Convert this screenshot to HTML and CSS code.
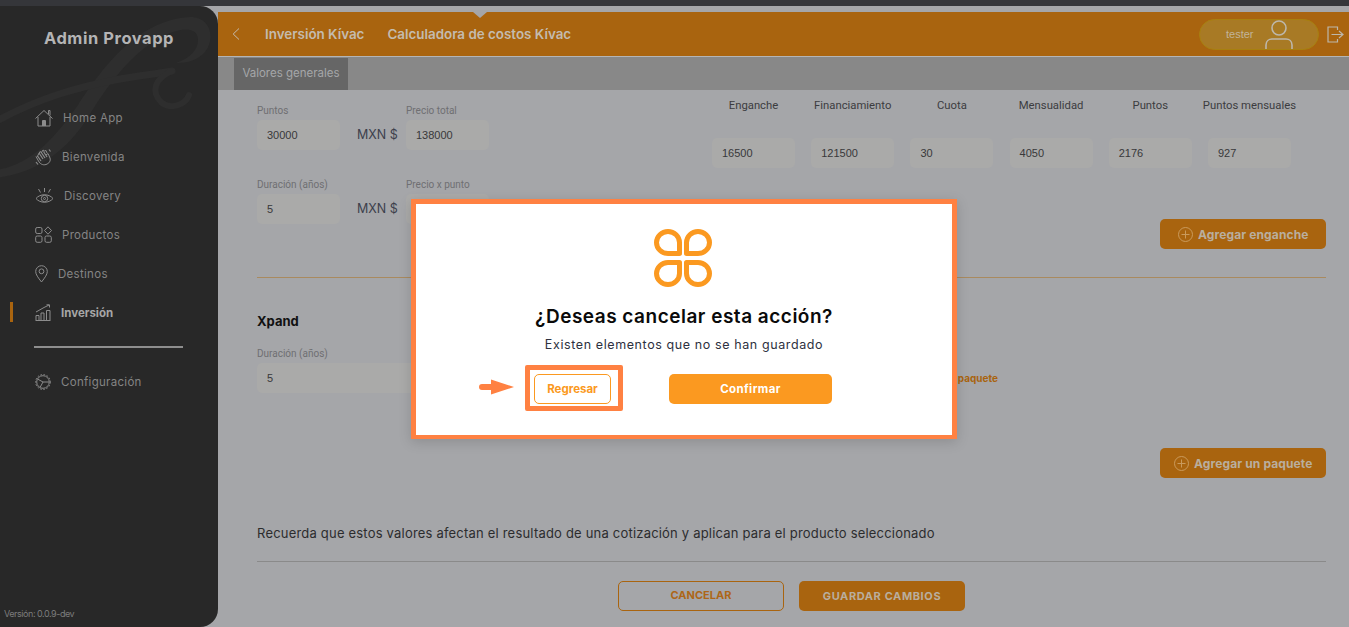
FILE: index.html
```html
<!DOCTYPE html>
<html>
    <head>
        <meta charset="utf-8">
        <title>Admin Provapp</title>
        <link rel="stylesheet" href="styles.css">
    </head>
    <body>
        <div class="strip"></div>
        <div class="app">
            <aside class="sidebar">
                <svg class="flourish" viewBox="0 0 218 200" fill="none" stroke="#2e2e2e" stroke-linecap="round">
                    <path d="M-5 170C30 166 55 138 78 105C100 72 135 20 190 17C212 17 215 40 205 52C198 60 188 63 176 63C190 58 198 50 198 40C198 28 185 27 170 33C130 50 105 90 85 122C60 158 30 174 -5 178Z" fill="#2e2e2e" stroke="none"/>
                    <path d="M-5 122C40 97 80 87 115 80C135 76 155 74 172 71" stroke-width="7"/>
                    <path d="M172 71C155 78 150 92 162 103C172 110 186 104 189 95" stroke-width="6"/>
                </svg>
                <h1 class="brand">Admin Provapp</h1>
                <nav class="menu">
                    <a class="menuItem">
                        <svg width="18" height="18" viewBox="0 0 18 18" fill="none" stroke="#8c8c8c"><path d="M0.5 9.5L9 1.5L17.5 9.5M3 8V17H15V8M7.5 17V11.5H10.5V17M13.5 5V1.5H15V6.5"/><rect x="7" y="12" width="4" height="5" fill="#8c8c8c" stroke="none"/></svg>
                        Home App
                    </a>
                    <a class="menuItem">
                        <svg width="17" height="18" viewBox="0 0 17 18" fill="none" stroke="#8c8c8c"><path d="M2 9L5 3.5L6.5 4.5L8 2L9.5 3L11 2.5L12 5M1 8.5L3.5 13C5 16 8 17.5 11 16.5C14 15.5 16 13 15 10L13 5.5L11 7"/><path d="M4 5L8 11M6 4L10 10M8.5 3.5L12 9M2.5 8L6 13M14 1.5L15.5 3.5M1 14L3 16.5" stroke-width="1.2"/></svg>
                        Bienvenida
                    </a>
                    <a class="menuItem">
                        <svg width="19" height="18" viewBox="0 0 19 18" fill="none" stroke="#8c8c8c"><path d="M1 11.5C5 6.5 14 6.5 18 11.5C14 16.5 5 16.5 1 11.5Z"/><circle cx="9.5" cy="11.5" r="3.2"/><circle cx="9.5" cy="11.5" r="1"/><path d="M9.5 1V5M3.5 2L5.5 5.5M15.5 2L13.5 5.5"/></svg>
                        Discovery
                    </a>
                    <a class="menuItem">
                        <svg width="17" height="17" viewBox="0 0 17 17" fill="none" stroke="#8c8c8c"><rect x="0.7" y="1.5" width="6.3" height="6" rx="1.5"/><rect x="0.7" y="10" width="6.3" height="6.3" rx="1.5"/><rect x="10" y="10" width="6.3" height="6.3" rx="1.5"/><path d="M13 0.8L16.5 4.5L13 8.2L9.5 4.5Z" stroke-linejoin="round"/></svg>
                        Productos
                    </a>
                    <a class="menuItem">
                        <svg width="13" height="18" viewBox="0 0 13 18" fill="none" stroke="#8c8c8c"><path d="M6.5 17C3 12.5 0.7 9.5 0.7 6.5A5.8 5.8 0 0 1 12.3 6.5C12.3 9.5 10 12.5 6.5 17Z"/><circle cx="6.5" cy="6.3" r="2.4"/></svg>
                        Destinos
                    </a>
                    <a class="menuItem active">
                        <svg width="16" height="17" viewBox="0 0 16 17" fill="none" stroke="#8c8c8c"><path d="M0.5 16.5H15.5M1 16V11.5H4V16M6 16V9H9V16M11.5 16V6.5H15V16M1 8L9 3.5L14 1M11.5 0.8H14.5V3.5"/></svg>
                        Inversión
                    </a>
                </nav>
                <hr class="sideLine">
                <a class="menuItem">
                    <svg width="16" height="16" viewBox="0 0 16 16" fill="none" stroke="#8c8c8c"><circle cx="8" cy="8" r="6.3"/><circle cx="8" cy="8" r="7.4" stroke-dasharray="1.6 1.6"/><path d="M8 8L2.5 5M8 8L14 8M8 8L5 13.5"/></svg>
                    Configuración
                </a>
                <p class="version">Versión: 0.0.9-dev</p>
            </aside>

            <main class="main">
                <header class="topbar">
                    <span class="caret"></span>
                    <svg class="back" width="8" height="12" viewBox="0 0 8 12" fill="none" stroke="#c4bbae"><path d="M7 0.5L1.2 6L7 11.5"/></svg>
                    <span class="crumb">Inversión Kívac</span>
                    <span class="crumb">Calculadora de costos Kívac</span>
                    <div class="userPill">
                        <span class="userName">tester</span>
                        <svg width="28" height="29" viewBox="0 0 28 29" fill="none" stroke="#bdb7ab" stroke-width="1.6"><circle cx="14" cy="8" r="7"/><path d="M1 29V25C1 21 4 19 7 19H21C24 19 27 21 27 25V29"/></svg>
                    </div>
                    <svg class="logout" width="17" height="17" viewBox="0 0 17 17" fill="none" stroke="#bdb7ab" stroke-width="1.2"><path d="M10.5 4V1H1V16H10.5V13M4.5 8.5H15.5M12 5L16 8.5L12 12"/></svg>
                </header>
                <div class="tabs">
                    <span class="tab">Valores generales</span>
                </div>

                <div class="content">
                    <section class="topRow">
                        <div class="general">
                            <div class="field">
                                <label>Puntos</label>
                                <div class="input">30000</div>
                            </div>
                            <span class="currency">MXN $</span>
                            <div class="field">
                                <label>Precio total</label>
                                <div class="input">138000</div>
                            </div>
                            <div class="field">
                                <label>Duración (años)</label>
                                <div class="input">5</div>
                            </div>
                            <span class="currency">MXN $</span>
                            <div class="field">
                                <label>Precio x punto</label>
                                <div class="input">4600</div>
                            </div>
                        </div>
                        <div class="plan">
                            <div class="planGrid">
                                <span class="planLabel">Enganche</span>
                                <span class="planLabel">Financiamiento</span>
                                <span class="planLabel">Cuota</span>
                                <span class="planLabel">Mensualidad</span>
                                <span class="planLabel">Puntos</span>
                                <span class="planLabel">Puntos mensuales</span>
                                <div class="input">16500</div>
                                <div class="input">121500</div>
                                <div class="input">30</div>
                                <div class="input">4050</div>
                                <div class="input">2176</div>
                                <div class="input">927</div>
                            </div>
                            <button class="addBtn addEnganche">
                                <svg width="15" height="15" viewBox="0 0 15 15" fill="none" stroke="#c99a5c"><circle cx="7.5" cy="7.5" r="7"/><path d="M7.5 3.5V11.5M3.5 7.5H11.5"/></svg>
                                Agregar enganche
                            </button>
                        </div>
                    </section>

                    <hr class="line">

                    <h2 class="sectionTitle">Xpand</h2>
                    <div class="packRow">
                        <div class="field packField">
                            <label>Duración (años)</label>
                            <div class="input">5</div>
                        </div>
                        <a class="removeLink">Eliminar paquete</a>
                    </div>
                    <button class="addBtn addPaquete">
                        <svg width="15" height="15" viewBox="0 0 15 15" fill="none" stroke="#c99a5c"><circle cx="7.5" cy="7.5" r="7"/><path d="M7.5 3.5V11.5M3.5 7.5H11.5"/></svg>
                        Agregar un paquete
                    </button>

                    <p class="note">Recuerda que estos valores afectan el resultado de una cotización y aplican para el producto seleccionado</p>
                    <hr class="line noteLine">

                    <div class="footerBtns">
                        <button class="cancelBtn">CANCELAR</button>
                        <button class="saveBtn">GUARDAR CAMBIOS</button>
                    </div>
                </div>
            </main>
        </div>

        <div class="modal">
            <svg class="modalLogo" width="58" height="58" viewBox="0 0 58 58" fill="none" stroke="#fb9920" stroke-width="5" stroke-linejoin="round">
                <path d="M25.5 24.5H14A11.5 11 0 1 1 25.5 13.5Z"/>
                <path d="M25.5 24.5H14A11.5 11 0 1 1 25.5 13.5Z" transform="translate(58 0) scale(-1 1)"/>
                <path d="M25.5 24.5H14A11.5 11 0 1 1 25.5 13.5Z" transform="translate(0 58) scale(1 -1)"/>
                <path d="M25.5 24.5H14A11.5 11 0 1 1 25.5 13.5Z" transform="translate(58 58) scale(-1 -1)"/>
            </svg>
            <h3 class="modalTitle">¿Deseas cancelar esta acción?</h3>
            <p class="modalText">Existen elementos que no se han guardado</p>
            <div class="modalActions">
                <svg class="arrow" width="36" height="16" viewBox="0 0 36 16"><path d="M3 5H12V0.5L35 8L12 15.5V11H3A3 3 0 0 1 3 5Z" fill="#ff8142"/></svg>
                <div class="highlight">
                    <button class="backBtn">Regresar</button>
                </div>
                <button class="confirmBtn">Confirmar</button>
            </div>
        </div>
    </body>
</html>
```

FILE: styles.css
```css
* {
    margin: 0;
    padding: 0;
    box-sizing: border-box;
}

body {
    width: 1349px;
    height: 627px;
    overflow: hidden;
    position: relative;
    background-color: #a5a6a9;
    font-family: Inter, 'Open Sans', sans-serif;
}

.strip {
    height: 6px;
    background-color: #35363a;
}

.app {
    display: flex;
    height: 621px;
}

/* sidebar */
.sidebar {
    width: 218px;
    flex-shrink: 0;
    position: relative;
    display: flex;
    flex-direction: column;
    background-color: #282828;
    border-radius: 0 18px 18px 0;
    overflow: hidden;
}
.flourish {
    position: absolute;
    top: -6px;
    left: 0;
    width: 218px;
    height: 200px;
}
.brand {
    position: relative;
    height: 20px;
    margin-top: 22px;
    margin-bottom: 50px;
    text-align: center;
    font-size: 16.5px;
    line-height: 20px;
    font-weight: 700;
    color: #b4b4b5;
    letter-spacing: 0.55px;
}
.menu {
    position: relative;
    display: flex;
    flex-direction: column;
}
.menuItem {
    position: relative;
    height: 39px;
    padding-left: 35px;
    display: flex;
    align-items: center;
    gap: 10px;
    font-size: 11.5px;
    color: #858585;
    letter-spacing: 0.3px;
}
.menuItem svg {
    flex-shrink: 0;
}
.active {
    font-weight: 700;
    color: #a6a6a6;
    letter-spacing: 0;
}
.active::before {
    content: '';
    position: absolute;
    left: 10px;
    top: 9px;
    width: 3px;
    height: 20px;
    background-color: #a9640f;
}
.sideLine {
    width: 149px;
    height: 2px;
    margin: 14px 0 14px 34px;
    border: none;
    background-color: #8e8e8e;
}
.version {
    margin-top: auto;
    padding: 0 0 7px 4px;
    font-size: 9px;
    line-height: 12px;
    color: #7d7d7d;
    letter-spacing: -0.45px;
}

/* header */
.main {
    flex: 1;
    padding-top: 6px;
    background-color: #a5a6a9;
}
.topbar {
    position: relative;
    height: 44px;
    padding-right: 5px;
    display: flex;
    align-items: center;
    background-color: #a9640f;
}
.caret {
    position: absolute;
    left: 255px;
    top: 0;
    border-left: 7px solid transparent;
    border-right: 7px solid transparent;
    border-top: 6px solid #a5a6a9;
}
.back {
    margin-left: 14px;
    margin-right: 25px;
}
.crumb {
    font-size: 13.4px;
    font-weight: 600;
    color: #c4bbae;
    margin-right: 23px;
}
.userPill {
    width: 120px;
    height: 31px;
    margin-left: auto;
    margin-right: 8px;
    padding-left: 26px;
    display: flex;
    align-items: flex-end;
    background-color: #a87a25;
    border: 1px solid #a8800f;
    border-radius: 16px;
    overflow: hidden;
}
.userName {
    width: 39px;
    align-self: center;
    font-family: 'Liberation Sans', sans-serif;
    font-size: 11px;
    color: #c2b49a;
}
.tabs {
    height: 33px;
    margin-top: 1px;
    padding: 1px 0 0 16px;
    background-color: #888888;
    box-shadow: 0 -1px 0 #b5b5b5;
}
.tab {
    display: block;
    width: 114px;
    height: 32px;
    font-size: 11.5px;
    line-height: 30px;
    text-align: center;
    color: #a5a6a9;
    background-color: #666666;
}

/* form */
.content {
    padding: 10px 23px 0 39px;
}
.topRow {
    display: flex;
    align-items: flex-start;
}
.general {
    width: 232px;
    margin-top: 5px;
    display: grid;
    grid-template-columns: 83px 66px 83px;
    row-gap: 29px;
}
.field label {
    display: block;
    height: 12px;
    margin-bottom: 3px;
    font-family: Roboto, sans-serif;
    font-size: 10px;
    line-height: 12px;
    color: #6f6f72;
}
.input {
    height: 30px;
    padding-left: 10px;
    font-family: 'Liberation Sans', sans-serif;
    font-size: 11px;
    line-height: 30px;
    color: #38383a;
    background-color: #aaaaa9;
    border-radius: 5px;
}
.currency {
    align-self: end;
    padding-left: 17px;
    font-size: 12.5px;
    line-height: 30px;
    color: #3c3f4c;
}
.plan {
    flex: 1;
    margin-left: 223px;
    display: flex;
    flex-direction: column;
}
.planGrid {
    display: grid;
    grid-template-columns: repeat(6, 83px);
    grid-template-rows: 12px 30px;
    column-gap: 16.2px;
    row-gap: 26px;
}
.planLabel {
    justify-self: center;
    white-space: nowrap;
    font-family: Roboto, sans-serif;
    font-size: 11.3px;
    line-height: 12px;
    color: #3c3c3f;
}
.addBtn {
    width: 166px;
    height: 30px;
    display: flex;
    align-items: center;
    gap: 5px;
    font-family: inherit;
    font-size: 12px;
    font-weight: 700;
    letter-spacing: 0.12px;
    color: #b9ae9e;
    background-color: #a9640f;
    border: none;
    border-radius: 5px;
}
.addEnganche {
    align-self: flex-end;
    margin-top: 51px;
    padding-left: 18px;
}
.addPaquete {
    margin: 55px 0 0 auto;
    padding-left: 14px;
}
.line {
    height: 1px;
    margin-top: 28px;
    border: none;
    background-color: #a98a5f;
}
.sectionTitle {
    margin-top: 35px;
    font-size: 13px;
    line-height: 16px;
    font-weight: 700;
    color: #111111;
}
.packRow {
    width: 741px;
    margin-top: 19px;
    display: flex;
    justify-content: space-between;
    align-items: flex-end;
}
.packField {
    width: 300px;
}
.removeLink {
    font-size: 10px;
    line-height: 30px;
    font-weight: 700;
    color: #a9640f;
}
.note {
    margin-top: 46px;
    font-size: 13px;
    line-height: 18px;
    color: #2c2c2e;
    letter-spacing: 0.2px;
}
.noteLine {
    margin-top: 19px;
    background-color: #8a8a8a;
}
.footerBtns {
    margin-top: 19px;
    display: flex;
    justify-content: center;
    gap: 15px;
}
.cancelBtn, .saveBtn {
    width: 166px;
    height: 30px;
    font-family: inherit;
    font-size: 11px;
    font-weight: 700;
    border-radius: 5px;
}
.cancelBtn {
    padding-bottom: 2px;
    color: #ad6618;
    background: transparent;
    border: 1px solid #a9640f;
}
.saveBtn {
    letter-spacing: 0.6px;
    color: #b9ae9e;
    background-color: #a9640f;
    border: none;
}

/* modal */
.modal {
    position: absolute;
    left: 411px;
    top: 199px;
    width: 546px;
    height: 240px;
    padding-top: 25px;
    display: flex;
    flex-direction: column;
    align-items: center;
    background-color: white;
    border: 5px solid #ff8142;
    border-bottom-width: 4px;
    box-shadow: rgba(0, 0, 0, 0.15) 0px 3px 12px;
}
.modalLogo {
    margin-left: -2px;
}
.modalTitle {
    margin-top: 18px;
    font-size: 19px;
    line-height: 24px;
    font-weight: 600;
    color: #0a0a0a;
    letter-spacing: 0.5px;
}
.modalText {
    margin-top: 8px;
    font-size: 12.5px;
    line-height: 16px;
    color: #2d3140;
    letter-spacing: 0.6px;
}
.modalActions {
    position: relative;
    align-self: stretch;
    margin-top: 12px;
    padding-left: 109px;
    display: flex;
    align-items: flex-start;
}
.arrow {
    position: absolute;
    left: 63px;
    top: 14px;
}
.highlight {
    width: 98px;
    height: 46px;
    padding: 4px 0 0 4px;
    border: 5px solid #ff8142;
    border-radius: 2px;
}
.backBtn, .confirmBtn {
    height: 30px;
    font-family: inherit;
    font-size: 11.5px;
    font-weight: 700;
    border-radius: 5px;
}
.backBtn {
    width: 77px;
    color: #fb9920;
    background-color: white;
    border: 1px solid #fb9920;
}
.confirmBtn {
    width: 163px;
    margin: 9px 0 0 46px;
    letter-spacing: 0.4px;
    color: white;
    background-color: #fb9920;
    border: none;
}
```
